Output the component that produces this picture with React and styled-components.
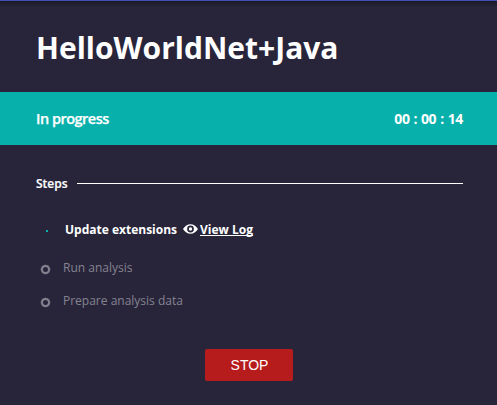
import React from "react";
import styled, { createGlobalStyle } from "styled-components";

const GlobalStyle = createGlobalStyle`
  * { box-sizing: border-box; }
  body { margin: 0; background: #28253b; }
`;

const Panel = styled.main`
  height: 405px;
  overflow: hidden;
  display: flex;
  flex-direction: column;
  background: linear-gradient(#1b1928, #28253b 6px);
  border-top: 1px solid #3f51b5;
  color: #fff;
  font-family: "Open Sans", sans-serif;
`;

const Title = styled.h1`
  margin: 0;
  height: 91px;
  padding: 25px 36px 0;
  font-size: 30px;
  line-height: 44px;
  font-weight: 700;
  white-space: nowrap;
`;

const StatusBar = styled.section`
  height: 53px;
  padding: 0 34px 1px 36px;
  display: flex;
  align-items: center;
  justify-content: space-between;
  background: #08b0ab;
  font-size: 15px;
`;

const Status = styled.span`
  font-size: 14.5px;
  font-weight: 600;
  letter-spacing: -0.5px;
  -webkit-text-stroke: 0.25px #fff;
`;

const Timer = styled.time`
  font-size: 14px;
  font-weight: 700;
  letter-spacing: -0.35px;
  word-spacing: 0.6px;
`;

const StepsHeading = styled.div`
  display: flex;
  align-items: center;
  gap: 9px;
  height: 20px;
  margin: 28px 34px 0 36px;
  font-size: 12px;
  font-weight: 600;
  -webkit-text-stroke: 0.2px #fff;
`;

const Rule = styled.span`
  flex: 1;
  height: 1px;
  background: #fff;
`;

const StepList = styled.ul`
  list-style: none;
  margin: 16px 0 0;
  padding: 0 36px;
`;

const Step = styled.li`
  display: flex;
  align-items: center;
  height: ${(p) => (p.$active ? 42 : 33)}px;
  padding-left: ${(p) => (p.$active ? 10 : 5)}px;
  padding-bottom: ${(p) => (p.$active ? 2 : 0)}px;
  gap: ${(p) => (p.$active ? 17 : 13)}px;
  font-size: 12px;
  font-weight: ${(p) => (p.$active ? 700 : 400)};
  color: ${(p) => (p.$active ? "#fff" : "#85838f")};
`;

const ActiveDot = styled.span`
  width: 2px;
  height: 2px;
  margin-top: 3px;
  background: #08b0ab;
`;

const PendingDot = styled.span`
  width: 9px;
  height: 9px;
  margin-top: 3px;
  border: 2.5px solid #85838f;
  border-radius: 50%;
  box-shadow: 0 0 0 0.3px #85838f;
`;

const LogLink = styled.a`
  display: flex;
  align-items: center;
  gap: 2px;
  margin-left: -11px;
  color: #fff;
`;

const LogText = styled.span`
  font-weight: 700;
  text-decoration: underline;
  text-decoration-skip-ink: none;
`;

const Actions = styled.div`
  display: flex;
  justify-content: center;
  margin-top: 32px;
  padding-left: 1px;
`;

const StopButton = styled.button`
  width: 88px;
  height: 32px;
  padding: 0 0 0 1px;
  border: 0;
  border-radius: 2px;
  background: #b71c1c;
  color: #fff;
  font: 14px "Liberation Sans", sans-serif;
`;

const EyeIcon = () => (
  <svg width="15" height="10" viewBox="0 0 15 10">
    <path
      fillRule="evenodd"
      fill="#fff"
      d="M0 5Q3 .2 7.5 .2T15 5Q12 9.8 7.5 9.8T0 5ZM7.5 1.6A3.4 3.4 0 1 0 7.5 8.4A3.4 3.4 0 1 0 7.5 1.6Z"
    />
    <circle cx="7.5" cy="5" r="1.7" fill="#fff" />
  </svg>
);

const pendingSteps = ["Run analysis", "Prepare analysis data"];

export default function App() {
  return (
    <>
      <GlobalStyle />
      <Panel>
        <Title>HelloWorldNet+Java</Title>
        <StatusBar>
          <Status>In progress</Status>
          <Timer>00 : 00 : 14</Timer>
        </StatusBar>
        <StepsHeading>
          Steps
          <Rule />
        </StepsHeading>
        <StepList>
          <Step $active>
            <ActiveDot />
            <span>Update extensions</span>
            <LogLink href="#log">
              <EyeIcon />
              <LogText>View Log</LogText>
            </LogLink>
          </Step>
          {pendingSteps.map((label) => (
            <Step key={label}>
              <PendingDot />
              <span>{label}</span>
            </Step>
          ))}
        </StepList>
        <Actions>
          <StopButton type="button">STOP</StopButton>
        </Actions>
      </Panel>
    </>
  );
}
